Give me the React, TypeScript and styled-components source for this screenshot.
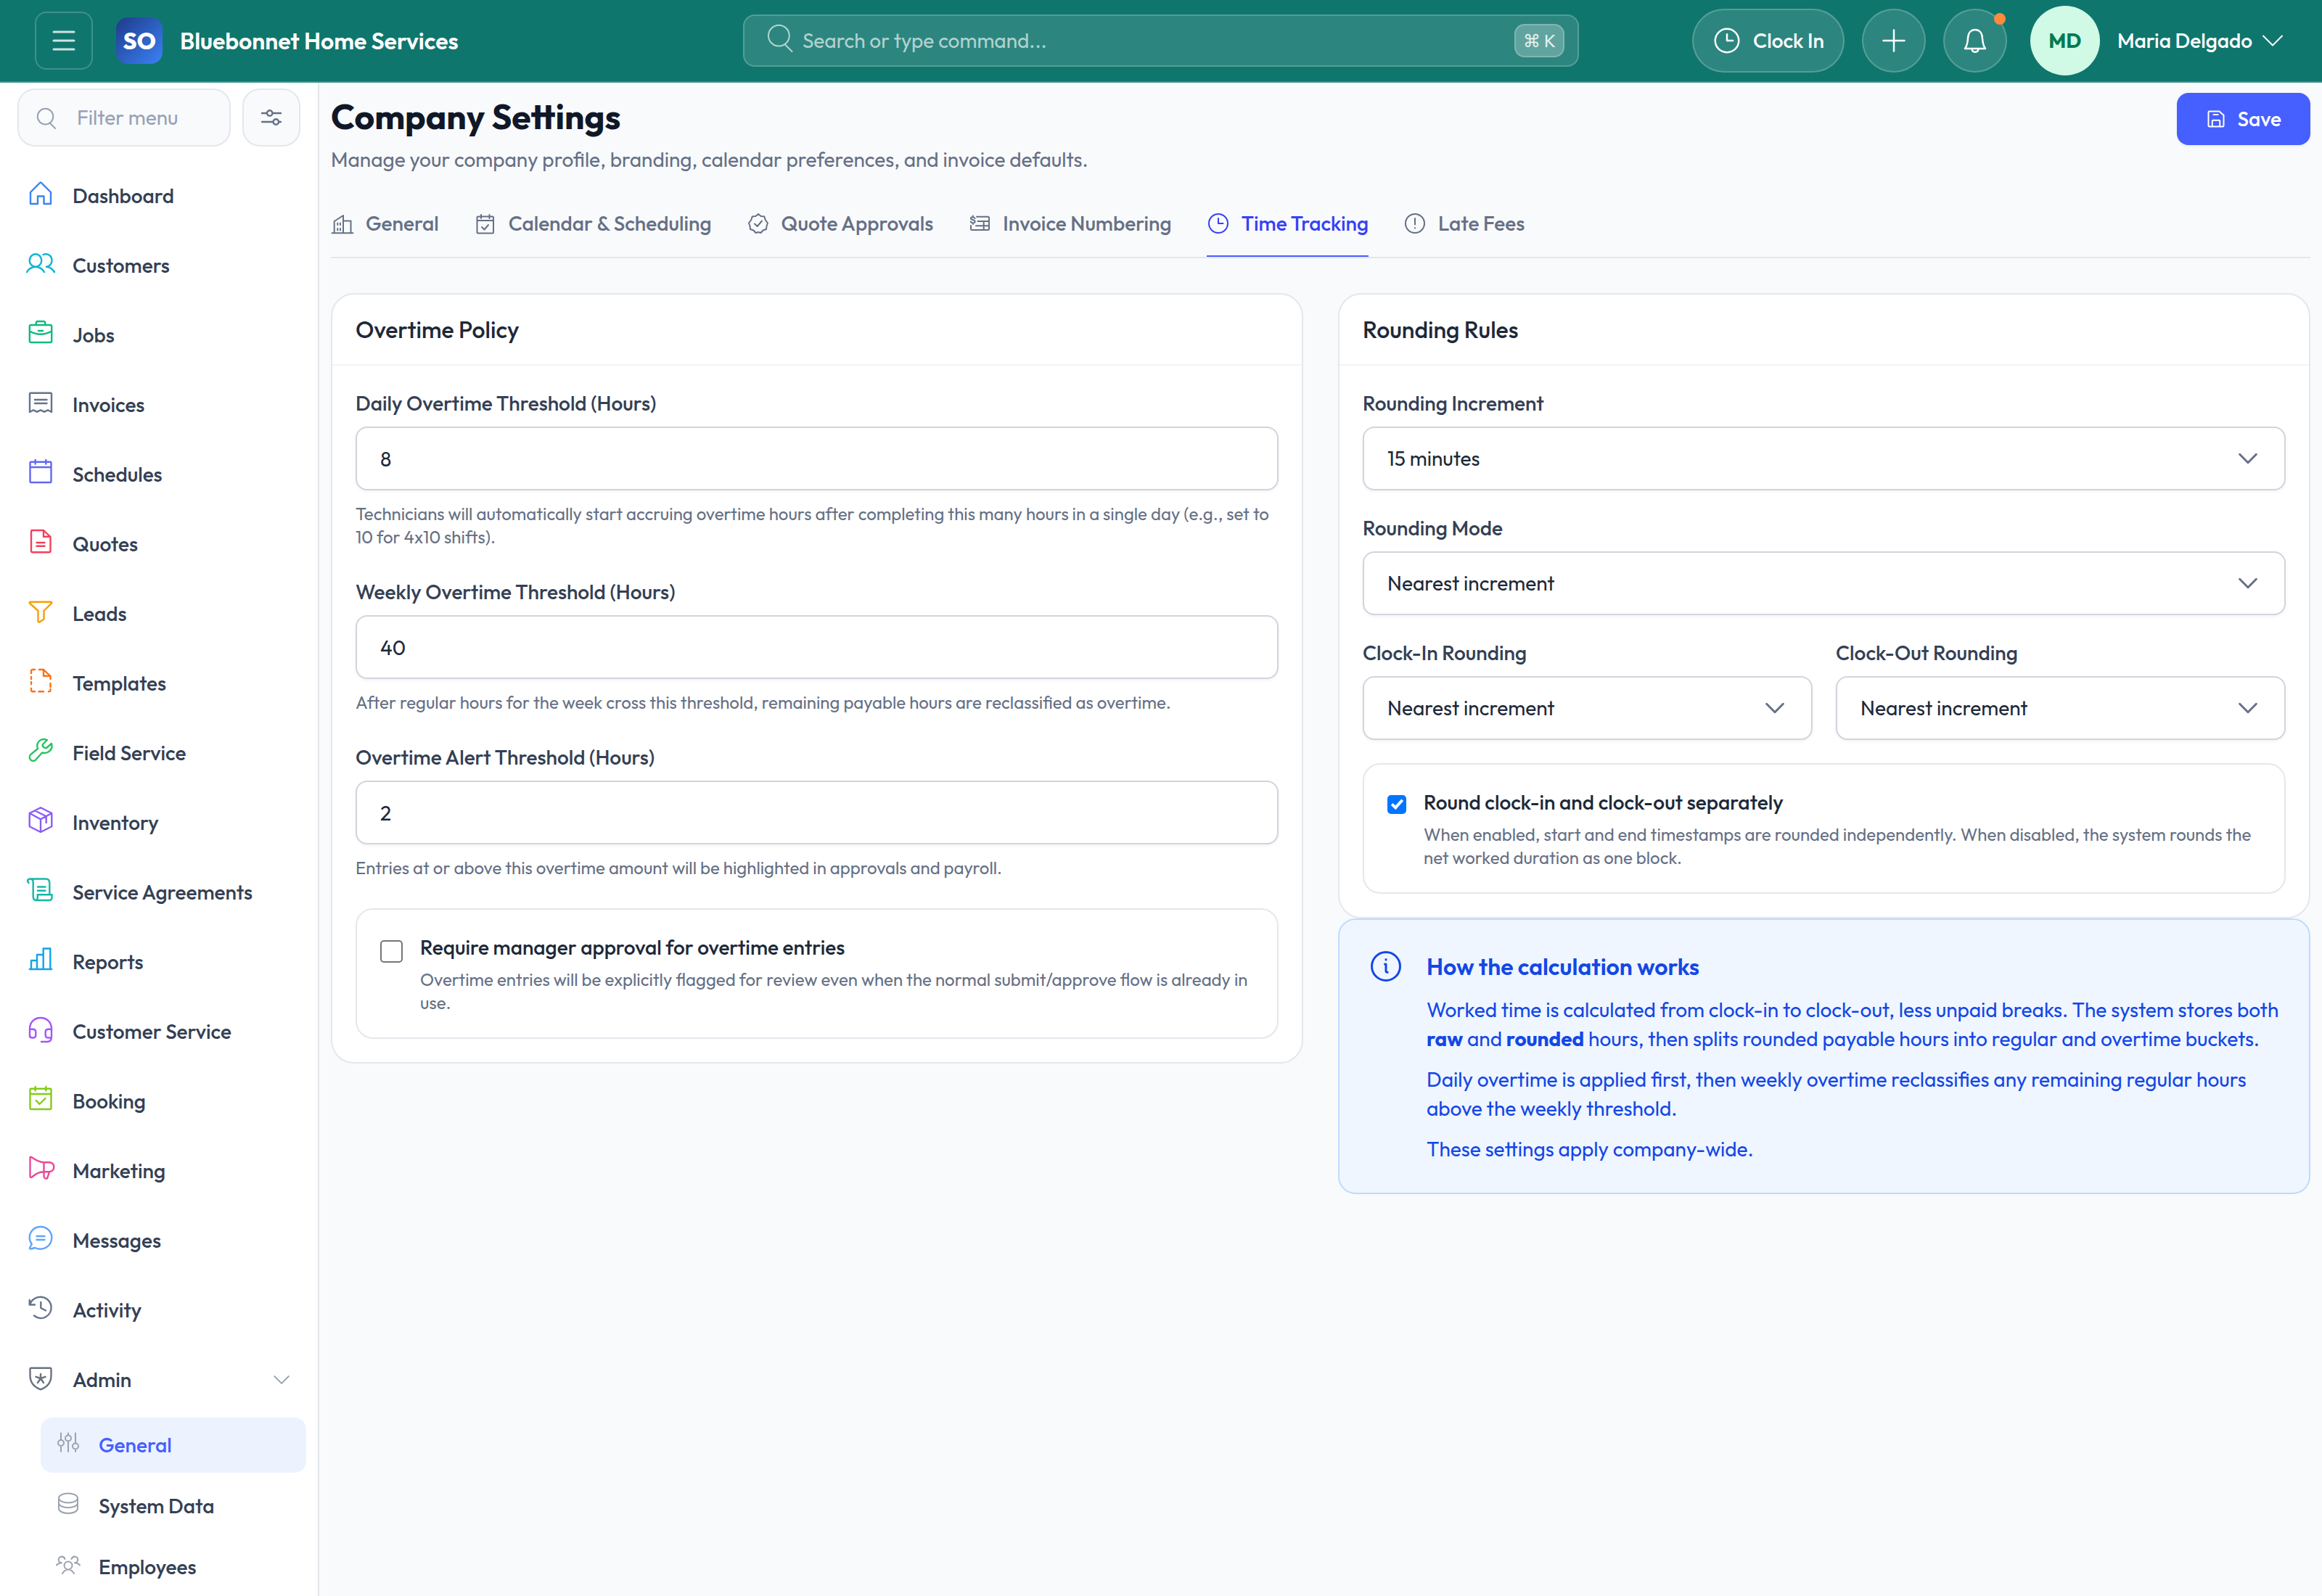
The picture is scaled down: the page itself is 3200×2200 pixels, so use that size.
import React, { ReactNode, useState } from 'react';
import styled, { createGlobalStyle } from 'styled-components';

const font = "Outfit, Lato, 'Open Sans', sans-serif";

const color = {
  teal: '#0f766e',
  brand: '#465fff',
  brandDark: '#3641f5',
  brandSoft: '#ecf3ff',
  page: '#f9fafc',
  line: '#e4e7ec',
  lineSoft: '#f2f4f7',
  control: '#d0d5dd',
  ink: '#101828',
  heading: '#1d2939',
  text: '#344054',
  muted: '#667085',
  faint: '#98a2b3',
  info: '#1447e6',
};

const GlobalStyle = createGlobalStyle`
  *, *::before, *::after { box-sizing: border-box; }
  body { margin: 0; background: ${color.page}; font-family: ${font}; font-size: 28px; line-height: 40px; color: ${color.text}; }
  button, input, select { font: inherit; color: inherit; margin: 0; }
  h1, h2, h3, p, ul { margin: 0; padding: 0; }
  ul { list-style: none; }
  a { color: inherit; text-decoration: none; }
`;

/* ---------- icons ---------- */

const Svg = styled.svg<{ $size: number }>`
  display: block;
  flex: none;
  width: ${(p) => p.$size}px;
  height: ${(p) => p.$size}px;
  overflow: visible;
  fill: none;
  stroke: currentColor;
  stroke-linecap: round;
  stroke-linejoin: round;
`;

const calendar = 'M1.5 4Q1.5 2.7 2.8 2.7H29.2Q30.5 2.7 30.5 4V29.5Q30.5 31 29 31H3Q1.5 31 1.5 29.5ZM1.5 10H30.5M8.7 0V5.5M23.3 0V5.5';
const smallCalendar = 'M4.5 8Q4.5 6.5 6 6.5H25.5Q27 6.5 27 8V28Q27 29.5 25.5 29.5H6Q4.5 29.5 4.5 28ZM4.5 12H27M10 4V9M21.5 4V9M11 21L14.5 24.5 20 18';

const icons: Record<string, ReactNode> = {
  menu: <path d="M2 4H30M2 16H30M2 28H30" />,
  search: <path d="M4 14.5A11.5 11.5 0 1 0 27 14.5A11.5 11.5 0 1 0 4 14.5M22 24L30 32" />,
  sliders: <path d="M3 10H10M17.5 10H29M3 22H18.5M26 22H29M10 10A3.7 3.7 0 1 0 17.4 10A3.7 3.7 0 1 0 10 10M18.6 22A3.7 3.7 0 1 0 26 22A3.7 3.7 0 1 0 18.6 22" />,
  home: <path d="M2 15L15 2Q16 1 17 2L30 15V31H20.5V20.5H12V31H2Z" />,
  users: <path d="M.7 13A8.3 8.7 0 1 0 17.3 13A8.3 8.7 0 1 0 .7 13M-3 29C0 24 4 21.7 9 21.7S18 24 21 29M19.5 5C26 2.5 31.5 7 31.5 13C31.5 18 28 21.5 24 21.7M24 21.7C29 22 32.5 25 35 29" />,
  briefcase: <path d="M.8 8Q.8 6 2.8 6H29.2Q31.2 6 31.2 8V28Q31.2 30 29.2 30H2.8Q.8 30 .8 28ZM9.8 6V3Q9.8 1 11.8 1H20.2Q22.2 1 22.2 3V6M.8 14.5Q16 23 31.2 14.5M13 14H19" />,
  receipt: <path d="M1 30V5Q1 3.7 2.3 3.7H29.7Q31 3.7 31 5V30L26 27.3 21 29.7 16 27.3 11 29.7 6 27.3ZM8 13H24.5M8 18H24.5" />,
  calendar: <path d={calendar} />,
  calendarCheck: <path d={calendar + 'M9.7 19L14.5 24 22.5 16'} />,
  smallCalendarCheck: <path d={smallCalendar} />,
  file: <path d="M4.5 1H20L29.5 10V29.5Q29.5 31.3 27.5 31.3H5Q3 31.3 3 29.5V2.5Q3 1 4.5 1ZM20 1V9.8H29.5M10.5 18H21.5M10.5 22.7H21.5" />,
  funnel: <path d="M1.5 3.8H30.5Q32 4.5 31 5.5L20.5 16V27.5L14.5 31.5Q12.5 32 12.5 30V16L1 5.5Q0 4.5 1.5 3.8Z" />,
  fileDashed: <path d="M3 6V3Q3 1 5 1H8M14 1H20L29.5 10V14M20 1V9.8H29.5M29.5 20V25M29.5 28V29.5Q29.5 31.3 27 31.3M20 31.3H13.5M8 31.3H5Q3 31.3 3 29V27M3 21V18M3 14V11" />,
  wrench: <path d="M25 2C16 -1.5 9 5.5 12 14L2.3 22.2C-2.5 27 4.5 34 9.3 29.3L18 19.5C26 22 33.5 15 31 7L24 13Q22.5 13.5 20 12Q18 9.5 19 8Z" />,
  box: <path d="M16 -.7L31.3 7V25.2L16 33 .7 25.2V7ZM.7 7L16 15.3 31.3 7M16 15.3V33M8.3 3.5L23.7 11.3V20" />,
  scroll: <path d="M-.5 7C-3 5 -2 1.5 1.5 1.5H23Q28.3 1.5 28.3 7V23.3M1.5 1.5C4.5 1.5 5.7 3 5.7 6V26Q5.7 31 10.5 31H28Q31.5 31 31.5 27V23.3H11.8V26.5Q12 31 8.5 31M12 12.5H22.5M12 17.8H22.5" />,
  bars: <path d="M.8 30H31.2M3 30V18H11V30M11 18V10H19.7V30M19.7 10V1.5H29.3V30" />,
  headset: <path d="M1 27V16C1 7 7.5 1 16 1S31 7 31 16V27Q31 34 25 34H17M1 16.8H5.5Q9.3 16.8 9.3 20.5V25Q9.3 28.5 5.5 28.5H4.5Q1 28.5 1 25.5M31 16.8H26.5Q22.7 16.8 22.7 20.5V25Q22.7 28.5 26.5 28.5H31" />,
  megaphone: <path d="M1.5 2Q1.5 .3 3.3 1Q13 8 20.5 8.3H28Q34.3 8.8 34.3 15Q34 20.5 28 21.3H20.5Q12 21.5 4 28.5Q1.5 29.8 1.5 27.5ZM20.5 8.3V27Q20.5 31 25 30.5L28 21.3" />,
  message: <path d="M3.8 25L1 30Q.8 32 3 31.5L8 30C20 35.5 31.3 27 31.3 16C31.3 7.5 24.5 1 16 1S.7 7.5 .7 16Q.7 21 3.8 25ZM10.5 14H21.5M10.5 19H21.5" />,
  history: <path d="M1 12C6 -2 27 -2 30.5 14C32 28 17 36 7 27.5M.7 6V12.5H8M16.3 9V17L23 20.5" />,
  shield: <path d="M3 3.8H29Q30.5 3.8 30.5 5.3V14C30.5 23 25 30 16 33.3C7 30 1.5 23 1.5 14V5.3Q1.5 3.8 3 3.8ZM16 12V18M16 18L9.5 15.8M16 18L22.5 15.8M16 18L12 24M16 18L20 24" />,
  mixer: <path d="M6 3.5V13M6 21V29M16 3.5V6.5M16 14.5V29M26 3.5V17.5M26 25.5V29M2 17A4 4 0 1 0 10 17A4 4 0 1 0 2 17M12 10.5A4 4 0 1 0 20 10.5A4 4 0 1 0 12 10.5M22 21.5A4 4 0 1 0 30 21.5A4 4 0 1 0 22 21.5" />,
  database: <path d="M3 9A13 6.5 0 1 0 29 9A13 6.5 0 1 0 3 9V24C5 32 27 32 29 24V9M3 16.5C5 24 27 24 29 16.5" />,
  team: <path d="M10.5 18A5.5 5.5 0 1 0 21.5 18A5.5 5.5 0 1 0 10.5 18M8 29C10 25.5 13 23.5 16 23.5S22 25.5 24 29M11.5 9C9 3 1 6 3 11.5Q4 14 7 14.3Q2.5 14.5 0 17.5M20.5 9C23 3 31 6 29 11.5Q28 14 25 14.3Q29.5 14.5 32 17.5" />,
  building: <path d="M1.5 29.3H30.5M4.7 29V13L17 5V29M17 12.5H27.5V29M9.3 15.5V18M13 15.5V18M9.3 23V25.5M13 23V25.5" />,
  badge: <path d="M16 3L19.7 6 24.3 6.5 25.7 11 29 15.5 27.5 19.500 27 24 22.500 25.500 19.500 29 16 28 12.500 29 9.500 25.500 5 24 4.500 19.500 3 15.500 6.300 11 7.700 6.500 12.300 6ZM11 16.500L14.700 20 21 12.500" />,
  invoice: <path d="M12 6.7H27.5Q29 6.7 29 8.2V23.5Q29 25 27.5 25H5.5Q4 25 4 23.5V19M13.5 13H29M11 19.2H29M21.7 13V25M9.5 9C8 6.5 4 7 4 9C4 11.5 9.7 10.5 9.7 13.5C9.5 16 5 16 3.7 13.5M6.8 5.5V7M6.8 15.5V17" />,
  clock: <path d="M3 16A13 13 0 1 0 29 16A13 13 0 1 0 3 16M16 9V16H22.5" />,
  alert: <path d="M3 16A13 13 0 1 0 29 16A13 13 0 1 0 3 16M16 9V17.5M16 22V22.4" />,
  plus: <path d="M16 1.5V30.5M1.5 16H30.5" />,
  bell: <path d="M2 27H30Q26.5 22 26 13C25.8 5 21.5 1 16 1S6.2 5 6 13Q5.5 22 2 27ZM11.5 27.5C12 33 20 33 20.5 27.5" />,
  save: <path d="M4 5.5Q4 4 5.5 4H21L28 10V26.5Q28 28 26.5 28H5.5Q4 28 4 26.5ZM10 28V19Q10 18 11 18H21Q22 18 22 19V28M12 9H19" />,
  chevron: <path d="M3 9.5L16 22.5 29 9.5" />,
  info: <path d="M3 16A13 13 0 1 0 29 16A13 13 0 1 0 3 16M15 14H16V20.5Q16 21.5 17.5 21.5M16 9.7V10" />,
};

function Icon({ name, size = 32, stroke = 2 }: { name: string; size?: number; stroke?: number }) {
  return (
    <Svg $size={size} viewBox="0 0 32 32" strokeWidth={(stroke * 32) / size} aria-hidden="true">
      {icons[name]}
    </Svg>
  );
}

/* ---------- header ---------- */

const Header = styled.header`
  display: grid;
  grid-template-columns: 1fr minmax(0, 1152px) 1fr;
  align-items: center;
  height: 114px;
  padding: 0 48px;
  color: #fff;
  background: ${color.teal};
  border-bottom: 2px solid #3f918b;
`;

const HeaderSide = styled.div<{ $end?: boolean }>`
  display: flex;
  align-items: center;
  justify-content: ${(p) => (p.$end ? 'flex-end' : 'flex-start')};
  gap: ${(p) => (p.$end ? 24 : 32)}px;
`;

const MenuButton = styled.button`
  display: grid;
  place-items: center;
  width: 80px;
  height: 80px;
  padding: 0;
  color: rgba(255, 255, 255, 0.8);
  background: none;
  border: 2px solid rgba(255, 255, 255, 0.2);
  border-radius: 16px;
`;

const Brand = styled.a`
  display: flex;
  align-items: center;
  gap: 24px;
  font-size: 32px;
  font-weight: 600;
  white-space: nowrap;
`;

const Logo = styled.span`
  display: grid;
  place-items: center;
  width: 64px;
  height: 64px;
  font-size: 32px;
  font-weight: 800;
  border-radius: 16px;
  background: linear-gradient(135deg, #1e3a8a, #3b82f6);
`;

const SearchBox = styled.label`
  display: flex;
  align-items: center;
  gap: 12px;
  height: 72px;
  padding: 0 18px 0 28px;
  color: rgba(255, 255, 255, 0.65);
  background: rgba(255, 255, 255, 0.12);
  border: 2px solid rgba(255, 255, 255, 0.2);
  border-radius: 16px;
`;

const SearchIcon = styled.span`
  padding-bottom: 10px;
`;

const BareInput = styled.input`
  flex: 1;
  min-width: 0;
  padding: 0;
  background: none;
  border: 0;
  outline: 0;
  &::placeholder {
    color: inherit;
    opacity: 1;
  }
`;

const Shortcut = styled.kbd`
  padding: 0 10px;
  font: 24px/42px ${font};
  color: #e6f2f1;
  background: rgba(255, 255, 255, 0.25);
  border: 2px solid rgba(255, 255, 255, 0.2);
  border-radius: 14px;
`;

const Pill = styled.button<{ $round?: boolean }>`
  position: relative;
  display: flex;
  align-items: center;
  justify-content: center;
  gap: ${(p) => (p.$round ? 0 : 16)}px;
  min-width: 88px;
  height: 88px;
  padding: 0 ${(p) => (p.$round ? 0 : 26)}px;
  font-weight: 500;
  color: #fff;
  background: rgba(255, 255, 255, 0.12);
  border: 2px solid rgba(255, 255, 255, 0.2);
  border-radius: 44px;
  white-space: nowrap;
`;

const Dot = styled.span`
  position: absolute;
  top: 4px;
  right: 0;
  width: 16px;
  height: 16px;
  background: #ff8a3c;
  border-radius: 50%;
`;

const Account = styled.button`
  display: flex;
  align-items: center;
  gap: 12px;
  margin-left: 8px;
  padding: 0 4px 0 0;
  font-weight: 500;
  color: #fff;
  background: none;
  border: 0;
  white-space: nowrap;
`;

const Avatar = styled.span`
  display: grid;
  place-items: center;
  width: 96px;
  height: 96px;
  margin-right: 12px;
  font-weight: 700;
  color: #007a55;
  background: #d0fae5;
  border-radius: 50%;
`;

/* ---------- sidebar ---------- */

const Shell = styled.div`
  display: flex;
  align-items: stretch;
  min-height: calc(100vh - 114px);
`;

const Sidebar = styled.aside`
  flex: none;
  width: 440px;
  padding-top: 8px;
  background: #fff;
  border-right: 2px solid ${color.line};
`;

const FilterRow = styled.div`
  display: flex;
  gap: 16px;
  padding: 0 24px;
  margin-bottom: 24px;
`;

const FilterBox = styled.label`
  display: flex;
  flex: 1;
  align-items: center;
  gap: 28px;
  min-width: 0;
  height: 80px;
  padding: 0 22px;
  color: ${color.faint};
  background: ${color.page};
  border: 2px solid ${color.line};
  border-radius: 24px;
`;

const FilterButton = styled.button`
  display: grid;
  place-items: center;
  width: 80px;
  height: 80px;
  padding: 0;
  color: ${color.muted};
  background: ${color.page};
  border: 2px solid ${color.line};
  border-radius: 24px;
`;

const NavList = styled.ul`
  display: flex;
  flex-direction: column;
  gap: 8px;
`;

const NavLink = styled.a`
  display: flex;
  align-items: center;
  gap: 28px;
  height: 88px;
  padding: 0 38px 0 40px;
  font-weight: 500;
`;

const NavIcon = styled.span<{ $color: string }>`
  padding-bottom: 8px;
  color: ${(p) => p.$color};
`;

const NavEnd = styled.span`
  margin-left: auto;
  color: ${color.faint};
`;

const SubList = styled(NavList)`
  padding: 8px 16px 0 56px;
`;

const SubLink = styled.a<{ $active?: boolean }>`
  display: flex;
  align-items: center;
  gap: 26px;
  height: 76px;
  padding: 0 22px;
  font-weight: 500;
  color: ${(p) => (p.$active ? color.brand : color.text)};
  background: ${(p) => (p.$active ? color.brandSoft : 'transparent')};
  border-radius: 16px;
`;

/* ---------- main ---------- */

const Main = styled.main`
  flex: 1;
  min-width: 0;
  padding: 14px 16px;
`;

const PageHead = styled.div`
  display: flex;
  align-items: flex-start;
  justify-content: space-between;
`;

const PageTitle = styled.h1`
  margin-bottom: 8px;
  font-size: 48px;
  line-height: 64px;
  font-weight: 700;
  color: ${color.ink};
`;

const PageNote = styled.p`
  color: ${color.muted};
`;

const SaveButton = styled.button`
  display: flex;
  align-items: center;
  gap: 16px;
  height: 72px;
  padding: 0 40px;
  font-weight: 500;
  color: #fff;
  background: ${color.brand};
  border: 0;
  border-radius: 16px;
  box-shadow: 0 2px 4px rgba(16, 24, 40, 0.05);
`;

const Tabs = styled.nav`
  display: flex;
  gap: 48px;
  margin: 24px 0 48px;
  border-bottom: 2px solid ${color.line};
`;

const Tab = styled.a<{ $active?: boolean }>`
  display: flex;
  align-items: center;
  gap: 16px;
  padding: 24px 0;
  font-weight: 500;
  color: ${(p) => (p.$active ? color.brandDark : color.muted)};
  border-bottom: 2px solid ${(p) => (p.$active ? color.brand : 'transparent')};
`;

const Columns = styled.div`
  display: grid;
  grid-template-columns: repeat(2, minmax(0, 1fr));
  align-items: start;
  gap: 48px;
`;

const Card = styled.section`
  background: #fff;
  border: 2px solid ${color.line};
  border-radius: 32px;
`;

const CardTitle = styled.h2`
  padding: 24px 32px;
  font-size: 32px;
  line-height: 48px;
  font-weight: 500;
  color: ${color.heading};
  border-bottom: 2px solid ${color.lineSoft};
`;

const CardBody = styled.div<{ $gap: number }>`
  display: flex;
  flex-direction: column;
  gap: ${(p) => p.$gap}px;
  padding: 32px;
`;

const Pair = styled.div`
  display: grid;
  grid-template-columns: repeat(2, minmax(0, 1fr));
  gap: 32px;
`;

const FieldLabel = styled.label`
  display: block;
  margin-bottom: 12px;
  font-weight: 500;
`;

const TextInput = styled.input`
  display: block;
  width: 100%;
  height: 88px;
  padding: 0 32px;
  color: ${color.heading};
  background: #fff;
  border: 2px solid ${color.control};
  border-radius: 16px;
  box-shadow: 0 2px 4px rgba(16, 24, 40, 0.05);
`;

const Hint = styled.p`
  display: block;
  font-size: 24px;
  line-height: 32px;
  color: ${color.muted};
`;

const FieldHint = styled(Hint)`
  margin-top: 16px;
`;

const SelectWrap = styled.div`
  position: relative;
`;

const SelectBox = styled(TextInput).attrs({ as: 'select' })`
  appearance: none;
`;

const SelectArrow = styled.span`
  position: absolute;
  top: 30px;
  right: 38px;
  color: ${color.muted};
  pointer-events: none;
`;

const CheckCard = styled.label`
  display: flex;
  align-items: flex-start;
  gap: 24px;
  padding: 32px;
  border: 2px solid ${color.line};
  border-radius: 24px;
`;

const Checkbox = styled.input<{ $size: number }>`
  appearance: none;
  flex: none;
  display: grid;
  place-items: center;
  width: ${(p) => p.$size}px;
  height: ${(p) => p.$size}px;
  margin-top: 10px;
  background: #fff;
  border: 2px solid #767676;
  border-radius: 5px;
  &:checked {
    background: #0075ff;
    border-color: #0075ff;
  }
  &:checked::before {
    content: '';
    width: 9px;
    height: 16px;
    margin-bottom: 4px;
    border: solid #fff;
    border-width: 0 4px 4px 0;
    transform: rotate(42deg);
  }
`;

const CheckTitle = styled.span`
  display: block;
  margin-bottom: 8px;
  font-weight: 500;
  color: ${color.heading};
`;

const InfoCard = styled.section`
  display: flex;
  align-items: flex-start;
  gap: 32px;
  padding: 40px;
  color: ${color.info};
  background: #eff6ff;
  border: 2px solid #bedbff;
  border-radius: 24px;
`;

const InfoText = styled.div`
  display: flex;
  flex-direction: column;
  gap: 16px;
  min-width: 0;
`;

const InfoTitle = styled.h3`
  font-size: 32px;
  line-height: 48px;
  font-weight: 600;
`;

/* ---------- data ---------- */

const nav: [string, string, string][] = [
  ['Dashboard', 'home', '#3b82f6'],
  ['Customers', 'users', '#06b6d4'],
  ['Jobs', 'briefcase', '#10b981'],
  ['Invoices', 'receipt', '#64748b'],
  ['Schedules', 'calendar', '#6366f1'],
  ['Quotes', 'file', '#f43f5e'],
  ['Leads', 'funnel', '#f59e0b'],
  ['Templates', 'fileDashed', '#f97316'],
  ['Field Service', 'wrench', '#22c55e'],
  ['Inventory', 'box', '#8b5cf6'],
  ['Service Agreements', 'scroll', '#14b8a6'],
  ['Reports', 'bars', '#0ea5e9'],
  ['Customer Service', 'headset', '#a855f7'],
  ['Booking', 'calendarCheck', '#84cc16'],
  ['Marketing', 'megaphone', '#ec4899'],
  ['Messages', 'message', '#60a5fa'],
  ['Activity', 'history', '#64748b'],
  ['Admin', 'shield', '#6b7280'],
];

const subNav: [string, string][] = [
  ['General', 'mixer'],
  ['System Data', 'database'],
  ['Employees', 'team'],
];

const tabs: [string, string][] = [
  ['General', 'building'],
  ['Calendar & Scheduling', 'smallCalendarCheck'],
  ['Quote Approvals', 'badge'],
  ['Invoice Numbering', 'invoice'],
  ['Time Tracking', 'clock'],
  ['Late Fees', 'alert'],
];

function NumberField({ id, label, value, hint }: { id: string; label: string; value: string; hint: string }) {
  return (
    <div>
      <FieldLabel htmlFor={id}>{label}</FieldLabel>
      <TextInput id={id} inputMode="decimal" defaultValue={value} aria-describedby={`${id}-hint`} />
      <FieldHint id={`${id}-hint`}>{hint}</FieldHint>
    </div>
  );
}

function SelectField({ id, label, options }: { id: string; label: string; options: string[] }) {
  return (
    <div>
      <FieldLabel htmlFor={id}>{label}</FieldLabel>
      <SelectWrap>
        <SelectBox id={id}>
          {options.map((o) => (
            <option key={o}>{o}</option>
          ))}
        </SelectBox>
        <SelectArrow>
          <Icon name="chevron" size={28} stroke={3} />
        </SelectArrow>
      </SelectWrap>
    </div>
  );
}

function CheckField({ size, title, hint, initial }: { size: number; title: string; hint: string; initial: boolean }) {
  const [on, setOn] = useState(initial);
  return (
    <CheckCard>
      <Checkbox type="checkbox" $size={size} checked={on} onChange={() => setOn(!on)} />
      <span>
        <CheckTitle>{title}</CheckTitle>
        <Hint as="span">{hint}</Hint>
      </span>
    </CheckCard>
  );
}

const modes = ['Nearest increment'];

export default function App() {
  return (
    <>
      <GlobalStyle />
      <Header>
        <HeaderSide>
          <MenuButton aria-label="Toggle menu">
            <Icon name="menu" stroke={3} />
          </MenuButton>
          <Brand href="#">
            <Logo>SO</Logo>
            Bluebonnet Home Services
          </Brand>
        </HeaderSide>
        <SearchBox>
          <SearchIcon>
            <Icon name="search" size={40} />
          </SearchIcon>
          <BareInput type="text" placeholder="Search or type command..." aria-label="Search" />
          <Shortcut>⌘ K</Shortcut>
        </SearchBox>
        <HeaderSide $end>
          <Pill>
            <Icon name="clock" size={40} stroke={2.5} />
            Clock In
          </Pill>
          <Pill $round aria-label="Add">
            <Icon name="plus" stroke={2.5} />
          </Pill>
          <Pill $round aria-label="Notifications">
            <Icon name="bell" stroke={2.5} />
            <Dot />
          </Pill>
          <Account>
            <Avatar>MD</Avatar>
            Maria Delgado
            <Icon name="chevron" />
          </Account>
        </HeaderSide>
      </Header>
      <Shell>
        <Sidebar>
          <FilterRow>
            <FilterBox>
              <Icon name="search" size={30} />
              <BareInput type="text" placeholder="Filter menu" aria-label="Filter menu" />
            </FilterBox>
            <FilterButton aria-label="Menu options">
              <Icon name="sliders" stroke={2.4} />
            </FilterButton>
          </FilterRow>
          <NavList>
            {nav.map(([label, icon, tint]) => (
              <li key={label}>
                <NavLink href="#">
                  <NavIcon $color={tint}>
                    <Icon name={icon} stroke={2.4} />
                  </NavIcon>
                  {label}
                  {label === 'Admin' && (
                    <NavEnd>
                      <Icon name="chevron" size={24} />
                    </NavEnd>
                  )}
                </NavLink>
              </li>
            ))}
          </NavList>
          <SubList>
            {subNav.map(([label, icon], i) => (
              <li key={label}>
                <SubLink href="#" $active={i === 0}>
                  <NavIcon $color="#9ca3af">
                    <Icon name={icon} />
                  </NavIcon>
                  {label}
                </SubLink>
              </li>
            ))}
          </SubList>
        </Sidebar>
        <Main>
          <PageHead>
            <div>
              <PageTitle>Company Settings</PageTitle>
              <PageNote>Manage your company profile, branding, calendar preferences, and invoice defaults.</PageNote>
            </div>
            <SaveButton>
              <Icon name="save" size={28} />
              Save
            </SaveButton>
          </PageHead>
          <Tabs>
            {tabs.map(([label, icon]) => (
              <Tab key={label} href="#" $active={label === 'Time Tracking'}>
                <Icon name={icon} />
                {label}
              </Tab>
            ))}
          </Tabs>
          <Columns>
            <Card>
              <CardTitle>Overtime Policy</CardTitle>
              <CardBody $gap={40}>
                <NumberField
                  id="daily"
                  label="Daily Overtime Threshold (Hours)"
                  value="8"
                  hint="Technicians will automatically start accruing overtime hours after completing this many hours in a single day (e.g., set to 10 for 4x10 shifts)."
                />
                <NumberField
                  id="weekly"
                  label="Weekly Overtime Threshold (Hours)"
                  value="40"
                  hint="After regular hours for the week cross this threshold, remaining payable hours are reclassified as overtime."
                />
                <NumberField
                  id="alert"
                  label="Overtime Alert Threshold (Hours)"
                  value="2"
                  hint="Entries at or above this overtime amount will be highlighted in approvals and payroll."
                />
                <CheckField
                  size={31}
                  initial={false}
                  title="Require manager approval for overtime entries"
                  hint="Overtime entries will be explicitly flagged for review even when the normal submit/approve flow is already in use."
                />
              </CardBody>
            </Card>
            <div>
              <Card>
                <CardTitle>Rounding Rules</CardTitle>
                <CardBody $gap={32}>
                  <SelectField id="increment" label="Rounding Increment" options={['15 minutes']} />
                  <SelectField id="mode" label="Rounding Mode" options={modes} />
                  <Pair>
                    <SelectField id="clock-in" label="Clock-In Rounding" options={modes} />
                    <SelectField id="clock-out" label="Clock-Out Rounding" options={modes} />
                  </Pair>
                  <CheckField
                    size={26}
                    initial
                    title="Round clock-in and clock-out separately"
                    hint="When enabled, start and end timestamps are rounded independently. When disabled, the system rounds the net worked duration as one block."
                  />
                </CardBody>
              </Card>
              <InfoCard>
                <Icon name="info" size={48} stroke={3} />
                <InfoText>
                  <InfoTitle>How the calculation works</InfoTitle>
                  <p>
                    Worked time is calculated from clock-in to clock-out, less unpaid breaks. The system stores both{' '}
                    <strong>raw</strong> and <strong>rounded</strong> hours, then splits rounded payable hours into
                    regular and overtime buckets.
                  </p>
                  <p>
                    Daily overtime is applied first, then weekly overtime reclassifies any remaining regular hours above
                    the weekly threshold.
                  </p>
                  <p>These settings apply company-wide.</p>
                </InfoText>
              </InfoCard>
            </div>
          </Columns>
        </Main>
      </Shell>
    </>
  );
}
